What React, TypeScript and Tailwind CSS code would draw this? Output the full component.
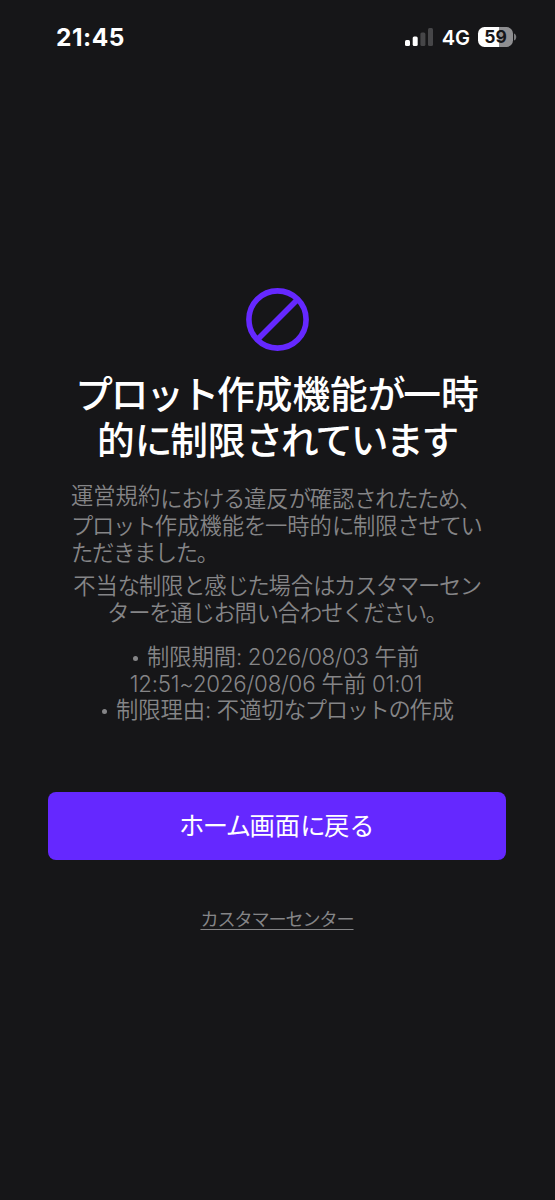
function Jp({ text }: { text: string }) {
  // kana is set slightly tighter than kanji
  const runs = text.split(/([\u3001-\u30ff]+)/).filter(Boolean);
  return (
    <>
      {runs.map((run, i) => (
        <span key={i} className={/^[\u3001-\u30ff]/.test(run) ? "tracking-[-0.06em]" : undefined}>{run}</span>
      ))}
    </>
  );
}

function StatusBar() {
  return (
    <div className="flex h-[74px] items-center justify-between pl-[56px] pr-[38px]">
      <p className="text-[24.5px] font-bold leading-[28px] tracking-[0.5px]">21:45</p>
      <div className="flex items-center">
        <svg className="mr-[8px] block" width="29" height="18" viewBox="0 0 29 18">
          <rect x="0" y="12" width="5" height="6" rx="1.5" fill="#fff" />
          <rect x="7.7" y="8.5" width="5" height="9.5" rx="1.5" fill="#fff" />
          <rect x="15.4" y="4.5" width="5" height="13.5" rx="1.5" fill="#464648" />
          <rect x="23" y="0" width="5" height="18" rx="1.5" fill="#464648" />
        </svg>
        <p className="mr-[8px] pt-[1px] text-[20px] font-semibold leading-[24px]">4G</p>
        <div className="flex h-[20px] w-[35px] items-center justify-center rounded-[6.5px] bg-[linear-gradient(90deg,#fff_59%,#8f8f91_59%)]">
          <span className="text-[17.5px] font-bold leading-[20px] text-[#161618]">59</span>
        </div>
        <svg className="ml-[1px] block" width="3" height="8" viewBox="0 0 3 8">
          <path d="M0 0.5C3 1.5 3 6.5 0 7.5Z" fill="#7c7c7e" />
        </svg>
      </div>
    </div>
  );
}

function BanIcon() {
  return (
    <svg className="block" width="64" height="64" viewBox="0 0 64 64" fill="none" stroke="#6528ff" strokeWidth="5.6">
      <circle cx="32.5" cy="31.5" r="28.6" />
      <path d="M13 51L52 12" />
    </svg>
  );
}

function Notice() {
  return (
    <div className="mt-[23px] w-[412px] whitespace-nowrap text-[22.3px] font-[350] leading-[27px] text-[#858587]">
      <p>
        <span className="relative -top-[3px]">運営規約</span><Jp text="における違反が確認されたため、" /><br />
        <Jp text="プロット作成機能を一時的に制限させてい" /><br />
        <Jp text="ただきました。" />
      </p>
      <p className="mt-[6px] text-center">
        <Jp text="不当な制限と感じた場合はカスタマーセン" /><br />
        <Jp text="ターを通じお問い合わせください。" />
      </p>
    </div>
  );
}

function Bullet() {
  return <span className="mr-[9px] inline-block size-[5px] rounded-full bg-[#858587] align-[4px]" />;
}

function Details() {
  return (
    <ul className="mt-[18px] whitespace-nowrap text-center text-[22.3px] font-[350] leading-[26.6px] text-[#858587]">
      <li className="pr-[2px]">
        <Bullet />制限期間<span className="tracking-[-0.4px]">: 2026/08/03 </span>午前<br />
        <span className="tracking-[-0.22px]">12:51~2026/08/06 </span>午前<span className="tracking-[-0.22px]"> 01:01</span>
      </li>
      <li className="pl-[2px]"><Bullet />制限理由<span className="tracking-[-0.4px]">: </span><Jp text="不適切なプロットの作成" /></li>
    </ul>
  );
}

export default function App() {
  return (
    <div className="flex h-[1200px] w-[555px] flex-col bg-[#161618] font-['Inter','Noto_Sans_CJK_JP',sans-serif] text-white">
      <StatusBar />
      <main className="flex flex-col items-center pr-[1px] pt-[214px]">
        <BanIcon />
        <h1 className="mt-[19px] whitespace-nowrap text-center text-[37.7px] font-medium leading-[46px]">
          <Jp text="プロット作成機能が一時" /><br />
          <Jp text="的に制限されています" />
        </h1>
        <div className="-mt-[1px]">
          <Notice />
        </div>
        <Details />
        <button className="mt-[68.2px] h-[68px] w-[458px] rounded-[8px] bg-[#6528ff] pr-[2px] text-[25.3px] leading-[30px]">
          <Jp text="ホーム画面に戻る" />
        </button>
        <a className="mt-[47px] text-[18.1px] leading-[24px] text-[#858587] underline decoration-1 underline-offset-[3px]">
          <Jp text="カスタマーセンター" />
        </a>
      </main>
    </div>
  );
}
